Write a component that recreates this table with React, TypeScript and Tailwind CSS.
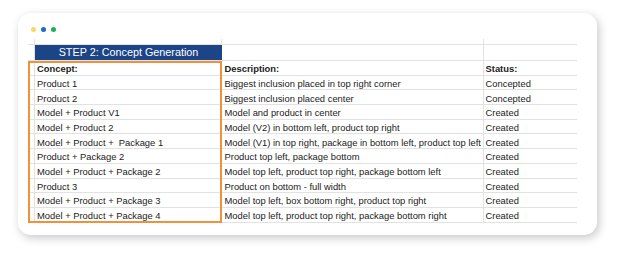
const rows: [string, string, string][] = [
  ["Product 1", "Biggest inclusion placed in top right corner", "Concepted"],
  ["Product 2", "Biggest inclusion placed center", "Concepted"],
  ["Model + Product V1", "Model and product in center", "Created"],
  ["Model + Product 2", "Model (V2) in bottom left, product top right", "Created"],
  ["Model + Product +  Package 1", "Model (V1) in top right, package in bottom left, product top left", "Created"],
  ["Product + Package 2", "Product top left, package bottom", "Created"],
  ["Model + Product + Package 2", "Model top left, product top right, package bottom left", "Created"],
  ["Product 3", "Product on bottom - full width", "Created"],
  ["Model + Product + Package 3", "Model top left, box bottom right, product top right", "Created"],
  ["Model + Product + Package 4", "Model top left, product top right, package bottom right", "Created"],
];

const Row = ({
  a,
  b,
  c,
  bold = false,
}: {
  a: string;
  b: string;
  c: string;
  bold?: boolean;
}) => (
  <div
    className={`flex h-[14.7px] border-b border-[#e2e2e2] text-[9.4px] leading-[10.5px] text-[#222] ${
      bold ? "font-bold" : ""
    }`}
  >
    <div className="w-[7px] border-r border-[#e2e2e2]" />
    <div className="w-[187px] border-r border-[#e2e2e2] pl-[2px] flex items-end whitespace-pre">
      {a}
    </div>
    <div className="w-[262px] border-r border-[#e2e2e2] pl-[2.5px] flex items-end whitespace-pre">
      {b}
    </div>
    <div className="w-[93px] pl-[1.5px] flex items-end">{c}</div>
  </div>
);

export default function App() {
  return (
    <div
      className="w-[618px] h-[255px] bg-white pl-[18px] pt-[13px]"
      style={{ fontFamily: '"Liberation Sans", Arial, sans-serif' }}
    >
      <div className="w-[579px] h-[222px] bg-white rounded-[13px] shadow-[2px_3px_10px_rgba(0,0,0,0.22)] pl-[10px] pt-[13.5px]">
        <div className="flex gap-[5px] ml-[2.5px] h-[5px]">
          <span className="w-[5px] h-[5px] rounded-full bg-[#f5da64]" />
          <span className="w-[5px] h-[5px] rounded-full bg-[#1c6fb8]" />
          <span className="w-[5px] h-[5px] rounded-full bg-[#1ab05a]" />
        </div>

        <div className="relative mt-[7px] w-[549px]">
          {/* top spacer row */}
          <div className="flex h-[6px] border-b border-[#e2e2e2]">
            <div className="w-[7px] border-r border-[#e2e2e2]" />
            <div className="w-[187px] border-r border-[#e2e2e2]" />
            <div className="w-[262px] border-r border-[#e2e2e2]" />
            <div className="w-[93px]" />
          </div>

          {/* title row */}
          <div className="flex h-[16.5px] border-b border-[#e2e2e2]">
            <div className="w-[7px] border-r border-[#e2e2e2]" />
            <div className="w-[187px] bg-[#1c4587] text-white text-[10.8px] flex items-center justify-center">
              STEP 2: Concept Generation
            </div>
            <div className="w-[262px] border-r border-[#e2e2e2]" />
            <div className="w-[93px]" />
          </div>

          <Row a="Concept:" b="Description:" c="Status:" bold />
          {rows.map(([a, b, c]) => (
            <Row key={a} a={a} b={b} c={c} />
          ))}

          {/* selection highlight */}
          <div className="absolute left-0 top-[22.5px] w-[194px] h-[162px] border-2 border-[#f0923b] pointer-events-none" />
        </div>
      </div>
    </div>
  );
}
